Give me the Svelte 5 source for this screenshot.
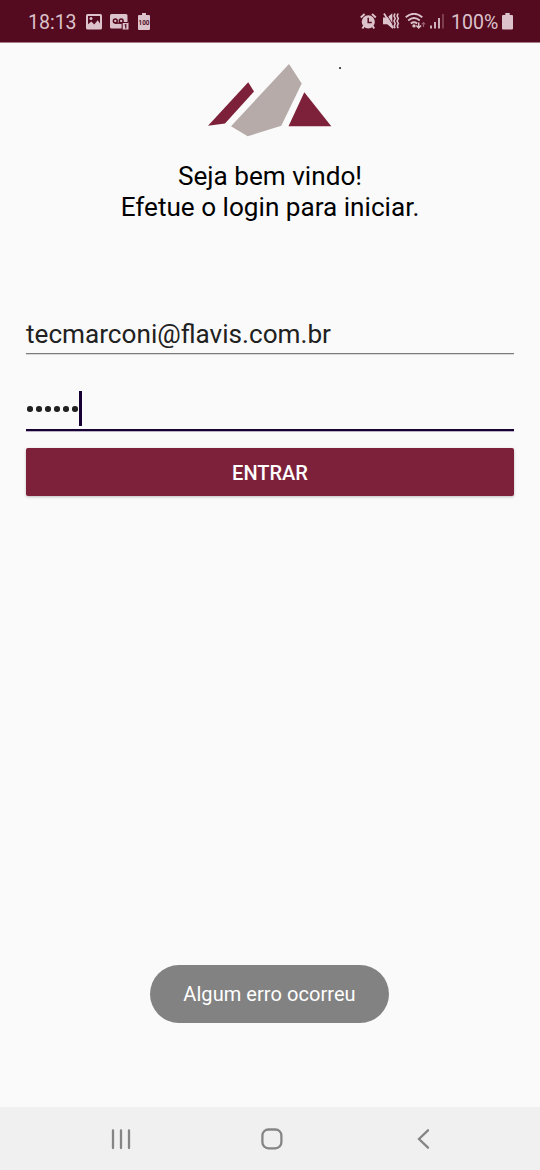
<script>
  let email = 'tecmarconi@flavis.com.br';
  let dots = [0, 1, 2, 3, 4, 5];
</script>

<div class="screen">
  <header class="status">
    <span class="time">18:13</span>
    <svg class="pic" width="16" height="16" viewBox="0 0 16 16">
      <rect width="16" height="15.5" rx="1.5" fill="#dcc2cb" />
      <path d="M2 10.2V2H14V9.5L11.7 6.2L8.2 10.4L5.4 7.4Z" fill="#540b1f" />
      <circle cx="5" cy="4.6" r="1.5" fill="#dcc2cb" />
    </svg>
    <svg class="voice" width="19" height="16" viewBox="0 0 19 16">
      <path d="M1.5 0H16Q17.5 0 17.5 1.5V8H12.5V14.5H1.5Q0 14.5 0 13V1.5Q0 0 1.5 0Z" fill="#dcc2cb" />
      <g fill="none" stroke="#540b1f" stroke-width="1.5">
        <circle cx="5.3" cy="7" r="1.9" />
        <circle cx="11.2" cy="7" r="1.9" />
        <path d="M5 9.1H11.5" />
      </g>
      <rect x="12.5" y="8.5" width="6" height="7" fill="#dcc2cb" />
      <path d="M12.1 15V8.5H18" stroke="#540b1f" stroke-width="1" fill="none" />
      <path d="M14.6 11.2L15.8 10.6V14.5" stroke="#540b1f" stroke-width="1.2" fill="none" />
    </svg>
    <svg class="full" width="12" height="17" viewBox="0 0 12 17">
      <path d="M4 0H8V2H11Q12 2 12 3V16Q12 17 11 17H1Q0 17 0 16V3Q0 2 1 2H4Z" fill="#dcc2cb" />
      <text x="6" y="12.2" text-anchor="middle" textLength="11" lengthAdjust="spacingAndGlyphs">100</text>
    </svg>
    <div class="spacer"></div>
    <svg class="alarm" width="17" height="17" viewBox="0 0 17 17">
      <circle cx="8.3" cy="8.8" r="5.5" stroke="#dcc2cb" stroke-width="2.2" fill="#dcc2cb" />
      <path d="M.8 4.4L4.6 1M15.8 4.4L12 1M4 13L2.4 15.6M12.6 13L14.2 15.6" stroke="#dcc2cb" stroke-width="2" />
      <path d="M8.2 4.8V9.4H11.8" fill="none" stroke="#540b1f" stroke-width="1.5" />
    </svg>
    <svg class="mute" width="17" height="17" viewBox="0 0 17 17">
      <path d="M0 4.4H4.2L9.3 .2V15.5L4.2 11.2H0Z" fill="#dcc2cb" />
      <path d="M3.2 .8L10.4 12.4" stroke="#540b1f" stroke-width=".9" />
      <path d="M1 .6L10.2 15.2" stroke="#dcc2cb" stroke-width="1.8" />
      <path d="M12 .5L11 3L12.2 5.5L11 8L12.2 10.5L11.2 13L12 15.2M15.1 .5L14.1 3L15.3 5.5L14.1 8L15.3 10.5L14.3 13L15.1 15.2" fill="none" stroke="#dcc2cb" stroke-width="1.6" />
    </svg>
    <svg class="wifi" width="21" height="17" viewBox="0 0 21 17">
      <g fill="none" stroke="#dcc2cb" stroke-width="1.8">
        <path d="M.7 4.2Q9 -2.7 17.3 4.2M3.2 7.5Q9 2.5 14.8 7.5M5.8 10.5Q9 8 12.2 10.5" />
        <path d="M13.7 9.5V14.8M11.3 12.4L13.7 15L16.1 12.4" stroke-width="1.5" />
      </g>
      <circle cx="9" cy="12.9" r="1.7" fill="#dcc2cb" />
      <path d="M18.5 14V9.5M16.8 11.4L18.5 9.6L20.2 11.4" fill="none" stroke="#98606f" stroke-width="1.1" />
    </svg>
    <svg class="signal" width="15" height="16" viewBox="0 0 15 16">
      <path d="M1 11.5V14.5M5 8V14.5M9 4V14.5" stroke="#dcc2cb" stroke-width="1.8" />
      <path d="M13 0V14.5" stroke="#874b5d" stroke-width="1.6" />
    </svg>
    <span class="percent">100%</span>
    <svg class="battery" width="11" height="17" viewBox="0 0 11 17">
      <path d="M3.3 0H7.7V2H10Q11 2 11 3V15.5Q11 16.5 10 16.5H1Q0 16.5 0 15.5V3Q0 2 1 2H3.3Z" fill="#dcc2cb" />
    </svg>
  </header>

  <main>
    <svg class="logo" width="160" height="100" viewBox="0 0 160 100">
      <path d="M13 75.8L53.2 32.2L59 41.5L30 73.5Z" fill="#7d213b" />
      <path d="M36 76.3L94 14L106.7 33.5L86.3 75.8L52.7 86.3Z" fill="#b6aba9" />
      <path d="M109.3 42.3L136.3 76.3H93.5Z" fill="#7d213b" />
      <rect x="144.2" y="17.2" width="1.7" height="1.7" fill="#111" />
    </svg>
    <h1>Seja bem vindo!<br />Efetue o login para iniciar.</h1>
    <div class="email">{email}</div>
    <div class="password">
      {#each dots as dot (dot)}<i></i>{/each}<b></b>
    </div>
    <button>ENTRAR</button>
    <div class="toast">Algum erro ocorreu</div>
  </main>

  <nav>
    <svg width="360" height="63" viewBox="0 0 360 63" fill="none" stroke="#858585" stroke-width="2.3" stroke-linecap="round">
      <path d="M23 23.3V41M31 23.3V41M39 23.3V41" />
      <rect x="172.4" y="22.5" width="19" height="18.8" rx="6" />
      <path d="M338 23.3L329 32L338 40.7" />
    </svg>
  </nav>
</div>

<style>
  :global(body) { background: #fafafa; }
  .screen {
    width: 540px; height: 1170px; overflow: hidden; box-sizing: border-box;
    display: flex; flex-direction: column; background: #fafafa;
    font-family: Roboto, "Liberation Sans", sans-serif;
  }
  svg { display: block; flex: none; }
  .status {
    height: 43px; flex: none; display: flex; align-items: flex-start;
    box-sizing: border-box; padding: 13px 27px 0 28px; background: #540b1f;
    border-bottom: 1px solid #a57c88;
    color: #dcc2cb; font-size: 19.5px; line-height: 19px;
  }
  .time { width: 58px; }
  .pic { margin-top: 1px; }
  .voice { margin: 1px 0 0 8px; }
  .full { margin-left: 9px; }
  .full text { font: bold 7.5px Roboto, sans-serif; fill: #540b1f; }
  .spacer { flex: 1; }
  .mute { margin-left: 6px; }
  .wifi { margin-left: 5px; }
  .signal { margin: 1px 6px 0 4px; }
  .percent { width: 47px; margin-right: 4px; white-space: nowrap; }
  main { flex: 1; display: flex; flex-direction: column; padding: 7px 26px 0; }
  .logo { margin-left: 169px; }
  h1 {
    margin: 11px 0 0; text-align: center; font-size: 26.15px; line-height: 31px;
    font-weight: 400; color: #000;
  }
  .email {
    margin-top: 95px; height: 36px; box-sizing: border-box; padding-top: 1px;
    border-bottom: 1px solid #7c7c7c; box-shadow: 0 1px #d8d8d8;
    font-size: 26.15px; line-height: 31px; color: #212121;
  }
  .password {
    height: 40px; margin-top: 37px; box-sizing: border-box; border-bottom: 2px solid #170033;
    box-shadow: 0 1px #b9b0c4; display: flex;
  }
  .password i { width: 5.6px; height: 5.6px; margin: 15px 1.7px 0; border-radius: 50%; background: #212121; }
  .password i:first-child { margin-left: 1.2px; }
  .password b { width: 2.5px; height: 35px; background: #170033; }
  button {
    margin: 17px 0 0; height: 48px; padding: 2px 0 0; border: 0; border-radius: 2px;
    background: #7d213b; color: #fff; font: 500 20px Roboto, sans-serif;
    box-shadow: 0 1px 3px rgba(0, 0, 0, .24);
  }
  .toast {
    align-self: center; margin: auto 1px 84px 0; width: 239px; height: 58px; border-radius: 29px;
    background: #828282; color: #fff; text-align: center; font-size: 20px; line-height: 58px;
    letter-spacing: .06px;
  }
  nav { height: 63px; flex: none; background: #f0f0f0; padding-left: 90px; }
</style>
